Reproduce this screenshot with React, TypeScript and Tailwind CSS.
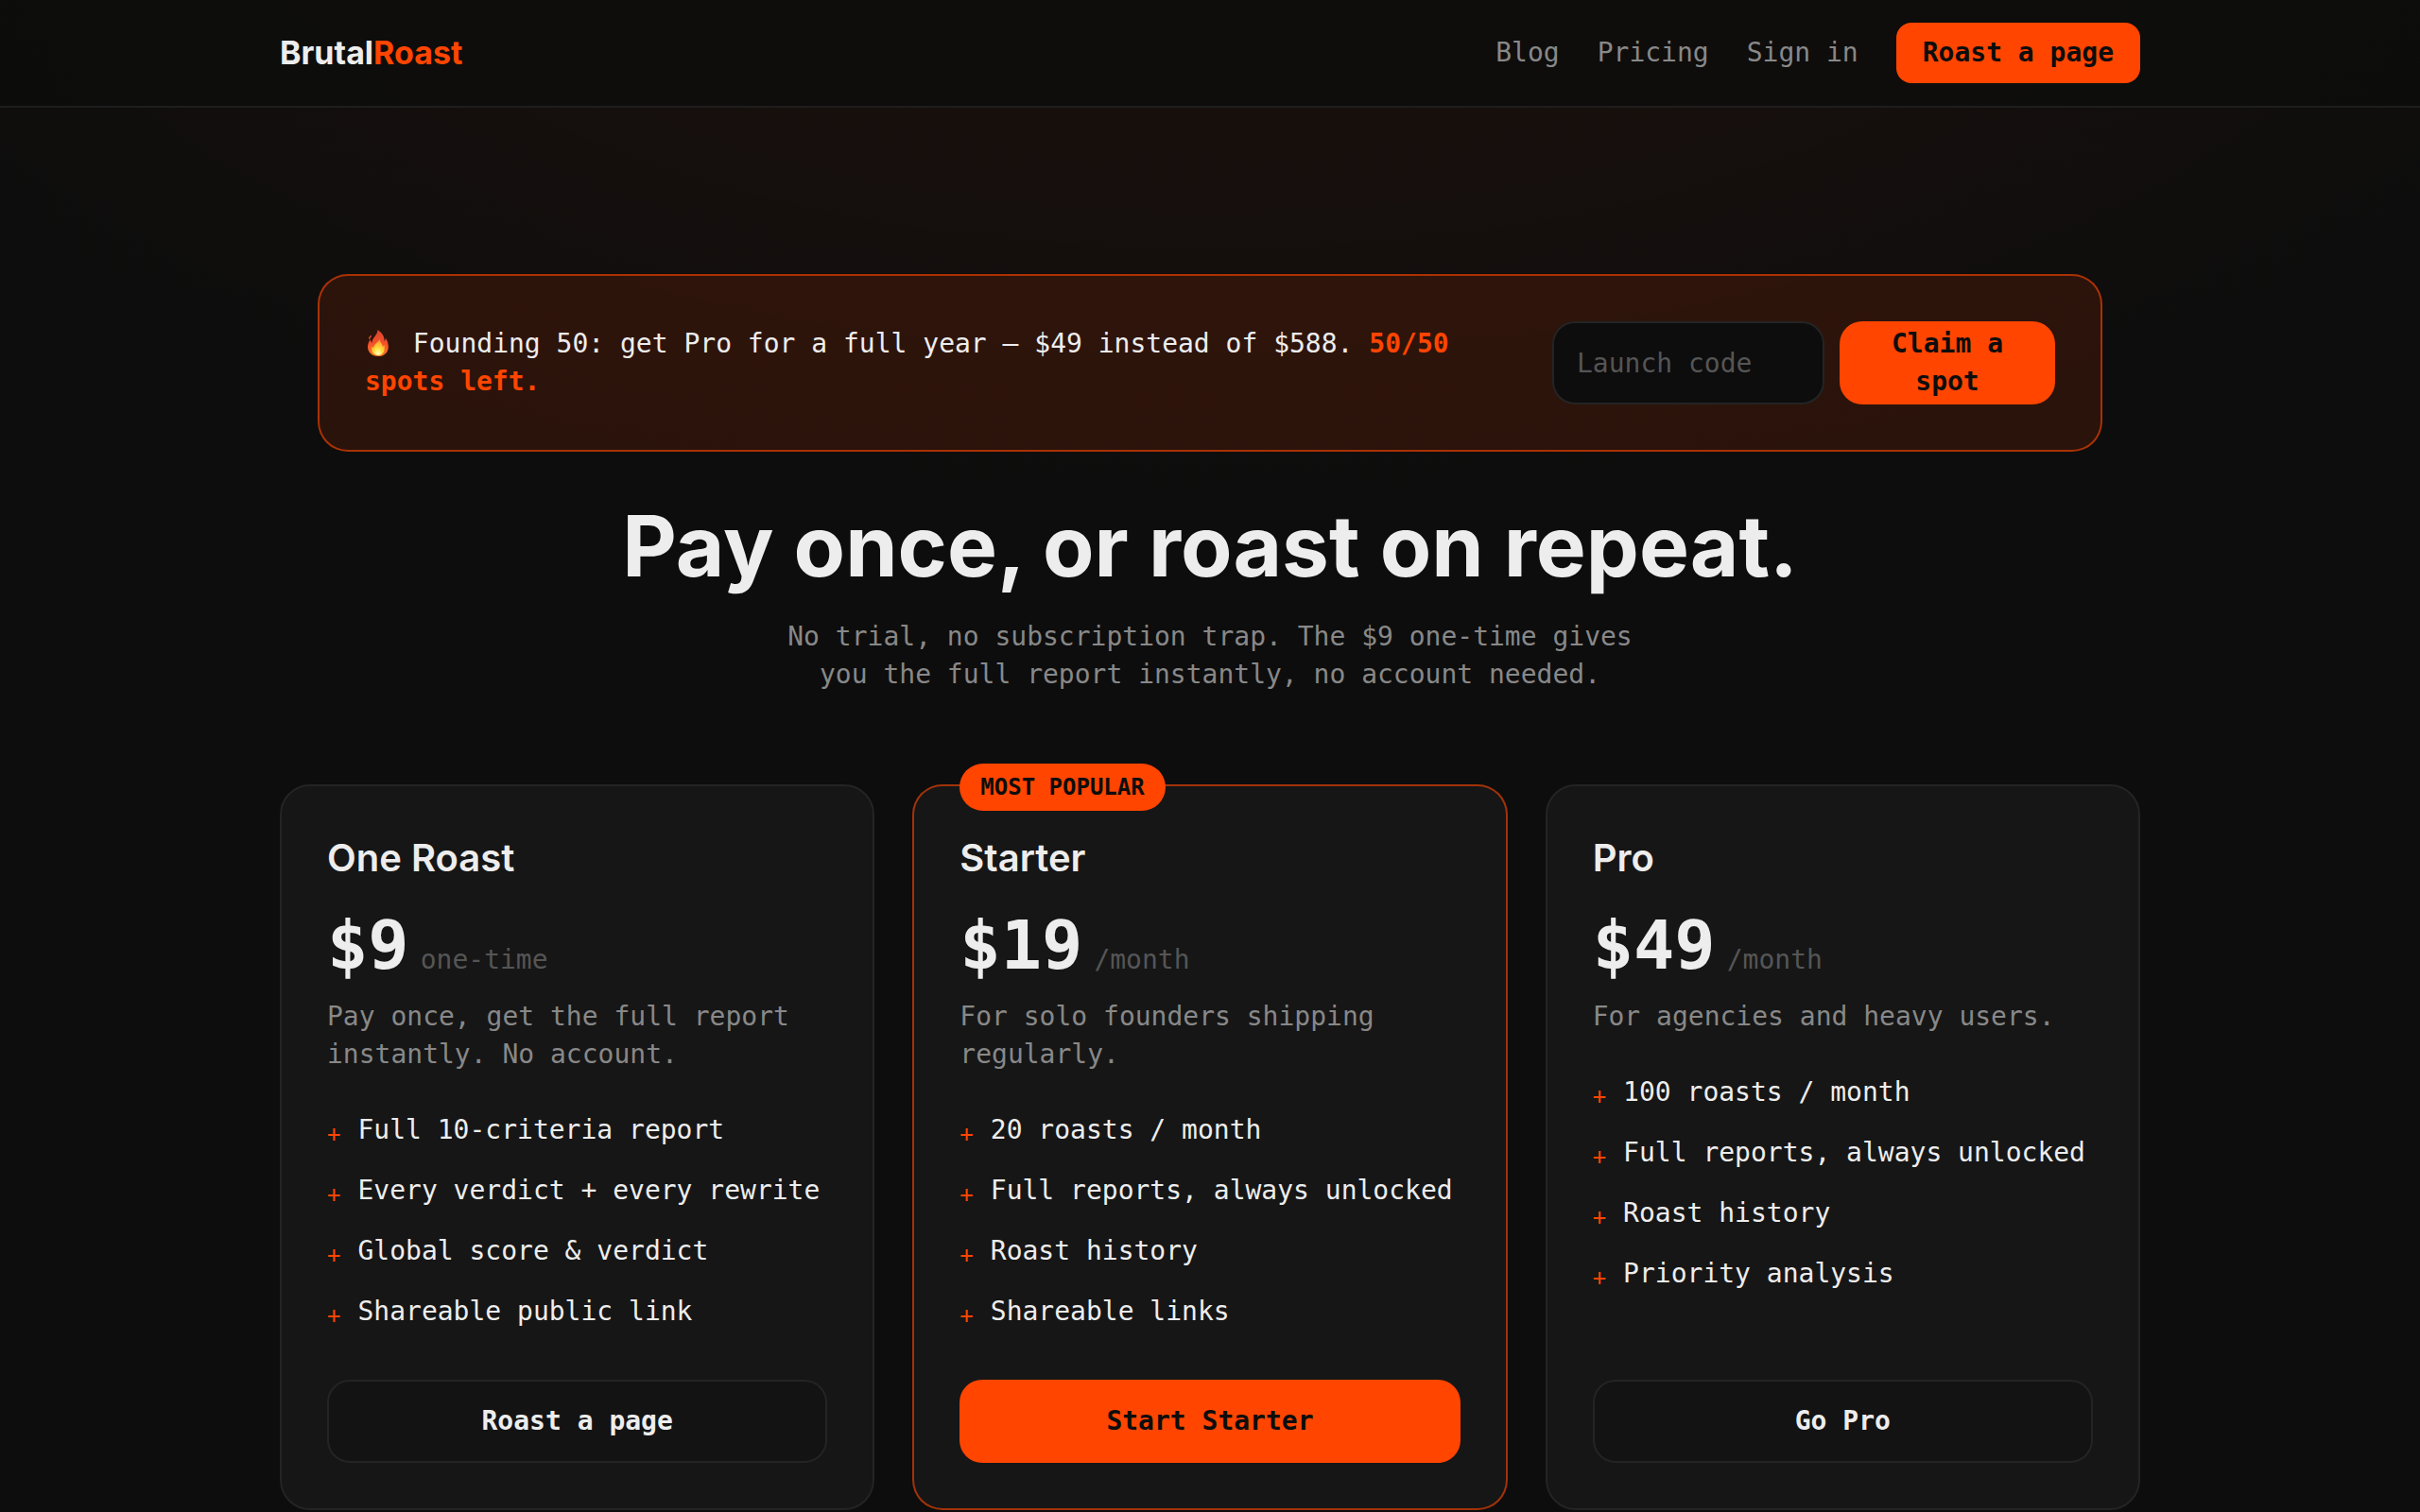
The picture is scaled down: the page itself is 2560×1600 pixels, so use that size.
import React, { useState } from 'react';
import clsx from 'clsx';

interface Plan {
  name: string;
  price: string;
  period: string;
  description: string;
  features: string[];
  cta: string;
  popular?: boolean;
}

const navLinks = ['Blog', 'Pricing', 'Sign in'];

const plans: Plan[] = [
  {
    name: 'One Roast',
    price: '$9',
    period: 'one-time',
    description: 'Pay once, get the full report instantly. No account.',
    features: [
      'Full 10-criteria report',
      'Every verdict + every rewrite',
      'Global score & verdict',
      'Shareable public link',
    ],
    cta: 'Roast a page',
  },
  {
    name: 'Starter',
    price: '$19',
    period: '/month',
    description: 'For solo founders shipping regularly.',
    features: ['20 roasts / month', 'Full reports, always unlocked', 'Roast history', 'Shareable links'],
    cta: 'Start Starter',
    popular: true,
  },
  {
    name: 'Pro',
    price: '$49',
    period: '/month',
    description: 'For agencies and heavy users.',
    features: ['100 roasts / month', 'Full reports, always unlocked', 'Roast history', 'Priority analysis'],
    cta: 'Go Pro',
  },
];

const FlameIcon: React.FC = () => (
  <svg viewBox="0 0 28 28" className="mr-1.5 inline-block h-7 w-7 align-[-4px]" aria-hidden="true">
    <defs>
      <linearGradient id="flame-outer" x1="0" y1="0" x2="0" y2="1">
        <stop offset="0" stopColor="#d8452c" />
        <stop offset="0.5" stopColor="#f4502a" />
        <stop offset="1" stopColor="#fb7a24" />
      </linearGradient>
      <radialGradient id="flame-inner" cx="0.5" cy="0.88" r="0.85">
        <stop offset="0" stopColor="#fffbd0" />
        <stop offset="0.35" stopColor="#ffe23d" />
        <stop offset="1" stopColor="#ff8a2a" />
      </radialGradient>
    </defs>
    <path
      d="M13.500 0c4.500 3 7.500 7 7 12 .9-.9 1.500-2.200 1.300-3.600 2 2.800 3 6.200 3 9.500C24.800 24 20.300 28 14 28S3 24 3 18c0-3.300 1.300-6 3-8 0 1.600.4 2.900 1.600 3.800C7.200 8.500 13.500 6 13.500 0Z"
      fill="url(#flame-outer)"
    />
    <path d="M7 5.500c-2 .9-3.300 2.700-3 4.800 1.600-1 3.200-2.400 3-4.800Z" fill="#d8452c" />
    <path
      d="M15.500 9c-.5 3.500 3.300 5.300 3.300 9 .8-.6 1.300-1.300 1.500-2.300 1.500 5.300-.3 11.300-6.300 11.300-5.800 0-8-5-6.400-9.700.4 1 1 1.500 1.800 1.600-.3-4.200 5.600-5.300 6.100-9.900Z"
      fill="url(#flame-inner)"
    />
  </svg>
);

const Header: React.FC = () => (
  <header className="border-b-2 border-[#1e1e1e] bg-[#0d0d0d]/85">
    <div className="mx-auto flex max-w-[2048px] items-center justify-between px-10 py-6">
      <a href="#" className="font-['Inter',sans-serif] text-[34px] leading-10 font-bold">
        Brutal<span className="text-[#ff4500]">Roast</span>
      </a>
      <nav className="flex items-center gap-10">
        {navLinks.map((link) => (
          <a key={link} href="#" className="text-[#888888] hover:text-[#ededed]">
            {link}
          </a>
        ))}
        <button className="rounded-2xl bg-[#ff4500] px-7 py-3 font-bold text-[#0d0d0d]">Roast a page</button>
      </nav>
    </div>
  </header>
);

const LaunchBanner: React.FC = () => {
  const [code, setCode] = useState('');

  return (
    <section className="mx-10 flex items-center justify-between gap-8 rounded-4xl border-2 border-[#ff4500]/60 bg-[#ff4500]/12 p-12">
      <p>
        <FlameIcon /> Founding 50: get Pro for a full year — $49 instead of $588.{' '}
        <strong className="font-bold text-[#ff4500]">50/50 spots left.</strong>
      </p>
      <form className="flex shrink-0 gap-4" onSubmit={(e) => e.preventDefault()}>
        <input
          type="text"
          aria-label="Launch code"
          placeholder="Launch code"
          value={code}
          onChange={(e) => setCode(e.target.value)}
          className="h-22 w-72 rounded-3xl border-2 border-[#242424] bg-[#0d0d0d] px-6 placeholder:text-[#555555] focus:outline-none"
        />
        <button type="submit" className="h-22 w-57 rounded-3xl bg-[#ff4500] px-12 font-bold text-[#0d0d0d]">
          Claim a spot
        </button>
      </form>
    </section>
  );
};

const PlanCard: React.FC<{ plan: Plan }> = ({ plan }) => (
  <article
    className={clsx(
      'relative flex flex-col rounded-4xl border-2 bg-[#161616] p-12',
      plan.popular ? 'border-[#ff4500]/60' : 'border-[#242424]'
    )}
  >
    {plan.popular && (
      <span className="absolute -top-6 left-12 rounded-full bg-[#ff4500] px-[22px] py-1.5 text-[24px] leading-[38px] font-bold text-[#0d0d0d]">
        MOST POPULAR
      </span>
    )}
    <h2 className="font-['Inter',sans-serif] text-[40px] leading-14 font-semibold">{plan.name}</h2>
    <div className="mt-7 mb-5 flex items-baseline gap-3">
      <span className="text-[72px] leading-none font-bold">{plan.price}</span>
      <span className="text-[#555555]">{plan.period}</span>
    </div>
    <p className="text-[#888888]">{plan.description}</p>
    <ul className="mt-10 mb-13 flex flex-1 flex-col gap-6">
      {plan.features.map((feature) => (
        <li key={feature} className="flex items-start gap-[18px]">
          <span className="mt-2 text-[24px] leading-8 text-[#ff4500]">+</span>
          <span>{feature}</span>
        </li>
      ))}
    </ul>
    <button
      className={clsx(
        'h-22 rounded-3xl font-bold',
        plan.popular ? 'bg-[#ff4500] text-[#0d0d0d]' : 'border-2 border-[#242424] bg-[#131313] text-[#ededed]'
      )}
    >
      {plan.cta}
    </button>
  </article>
);

export default function App() {
  return (
    <div className="min-h-screen bg-[#0d0d0d] bg-[radial-gradient(ellipse_62%_700px_at_50%_-160px,rgba(255,69,0,0.08),transparent)] font-['DejaVu_Sans_Mono',monospace] text-[28px] leading-10 text-[#ededed]">
      <Header />
      <main className="mx-auto max-w-[2048px] px-10 pt-44">
        <LaunchBanner />
        <div className="mt-12 text-center">
          <h1 className="font-['Inter',sans-serif] text-[89px] leading-[104px] font-bold">
            Pay once, or roast on repeat.
          </h1>
          <p className="mx-auto mt-6 max-w-[920px] text-[#888888]">
            No trial, no subscription trap. The $9 one-time gives you the full report instantly, no account needed.
          </p>
        </div>
        <div className="mt-24 grid grid-cols-3 gap-10">
          {plans.map((plan) => (
            <PlanCard key={plan.name} plan={plan} />
          ))}
        </div>
      </main>
    </div>
  );
}
